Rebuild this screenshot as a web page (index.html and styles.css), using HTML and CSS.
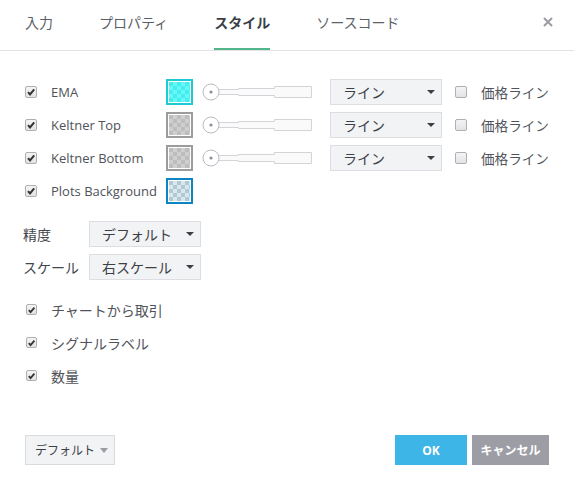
FILE: index.html
```html
<!DOCTYPE html>
<html lang="ja">
<head>
<meta charset="utf-8">
<link rel="stylesheet" href="styles.css">
</head>
<body>
<div class="dialog">
  <div class="tabs">
    <span class="tab">入力</span>
    <span class="tab">プロパティ</span>
    <span class="tab active">スタイル</span>
    <span class="tab">ソースコード</span>
    <span class="close">
      <svg width="10" height="10" viewBox="0 0 10 10"><path d="M1 1 L9 9 M9 1 L1 9" stroke="#9a9ca3" stroke-width="2"/></svg>
    </span>
  </div>

  <div class="content">
    <div class="plots">
      <div class="plot-row">
        <span class="cb checked"><svg width="10" height="10" viewBox="0 0 10 10"><path d="M2 5.2 L4 7.4 L8.2 2.4" fill="none" stroke="#333" stroke-width="2"/></svg></span>
        <span class="plot-label">EMA</span>
        <span class="swatch cyan"><span class="inner"></span></span>
        <svg class="slider" width="110" height="26" viewBox="0 0 110 26"><path d="M17 10.5 H36.5 V9.5 H72.5 V7.5 H109.5 V18.5 H72.5 V16.5 H36.5 V15.5 H17" fill="#fafafa" stroke="#d3d4d8"/><circle cx="9" cy="13" r="8" fill="#fff" stroke="#b9bcc4"/><circle cx="9" cy="13" r="1.6" fill="#8a8f9a"/></svg>
        <span class="select wide">ライン<span class="arrow"></span></span>
        <span class="cb"></span>
        <span class="price">価格ライン</span>
      </div>
      <div class="plot-row">
        <span class="cb checked"><svg width="10" height="10" viewBox="0 0 10 10"><path d="M2 5.2 L4 7.4 L8.2 2.4" fill="none" stroke="#333" stroke-width="2"/></svg></span>
        <span class="plot-label">Keltner Top</span>
        <span class="swatch gray"><span class="inner"></span></span>
        <svg class="slider" width="110" height="26" viewBox="0 0 110 26"><path d="M17 10.5 H36.5 V9.5 H72.5 V7.5 H109.5 V18.5 H72.5 V16.5 H36.5 V15.5 H17" fill="#fafafa" stroke="#d3d4d8"/><circle cx="9" cy="13" r="8" fill="#fff" stroke="#b9bcc4"/><circle cx="9" cy="13" r="1.6" fill="#8a8f9a"/></svg>
        <span class="select wide">ライン<span class="arrow"></span></span>
        <span class="cb"></span>
        <span class="price">価格ライン</span>
      </div>
      <div class="plot-row">
        <span class="cb checked"><svg width="10" height="10" viewBox="0 0 10 10"><path d="M2 5.2 L4 7.4 L8.2 2.4" fill="none" stroke="#333" stroke-width="2"/></svg></span>
        <span class="plot-label">Keltner Bottom</span>
        <span class="swatch gray"><span class="inner"></span></span>
        <svg class="slider" width="110" height="26" viewBox="0 0 110 26"><path d="M17 10.5 H36.5 V9.5 H72.5 V7.5 H109.5 V18.5 H72.5 V16.5 H36.5 V15.5 H17" fill="#fafafa" stroke="#d3d4d8"/><circle cx="9" cy="13" r="8" fill="#fff" stroke="#b9bcc4"/><circle cx="9" cy="13" r="1.6" fill="#8a8f9a"/></svg>
        <span class="select wide">ライン<span class="arrow"></span></span>
        <span class="cb"></span>
        <span class="price">価格ライン</span>
      </div>
      <div class="plot-row">
        <span class="cb checked"><svg width="10" height="10" viewBox="0 0 10 10"><path d="M2 5.2 L4 7.4 L8.2 2.4" fill="none" stroke="#333" stroke-width="2"/></svg></span>
        <span class="plot-label">Plots Background</span>
        <span class="swatch blue"><span class="inner"></span></span>
      </div>
    </div>

    <div class="fields">
      <div class="field-row">
        <span class="field-label">精度</span>
        <span class="select wide">デフォルト<span class="arrow"></span></span>
      </div>
      <div class="field-row">
        <span class="field-label">スケール</span>
        <span class="select wide">右スケール<span class="arrow"></span></span>
      </div>
    </div>

    <div class="checks">
      <div class="check-row">
        <span class="cb checked small"><svg width="10" height="10" viewBox="0 0 10 10"><path d="M2 5.2 L4 7.4 L8.2 2.4" fill="none" stroke="#333" stroke-width="2"/></svg></span>
        <span class="check-label">チャートから取引</span>
      </div>
      <div class="check-row">
        <span class="cb checked small"><svg width="10" height="10" viewBox="0 0 10 10"><path d="M2 5.2 L4 7.4 L8.2 2.4" fill="none" stroke="#333" stroke-width="2"/></svg></span>
        <span class="check-label">シグナルラベル</span>
      </div>
      <div class="check-row">
        <span class="cb checked small"><svg width="10" height="10" viewBox="0 0 10 10"><path d="M2 5.2 L4 7.4 L8.2 2.4" fill="none" stroke="#333" stroke-width="2"/></svg></span>
        <span class="check-label">数量</span>
      </div>
    </div>
  </div>

  <div class="footer">
    <span class="btn-default">デフォルト<span class="arrow gray-arrow"></span></span>
    <span class="spacer"></span>
    <span class="btn ok">OK</span>
    <span class="btn cancel">キャンセル</span>
  </div>
</div>
</body>
</html>
```

FILE: styles.css
```css
* { box-sizing: border-box; }
html, body { margin: 0; padding: 0; background: #fff; }
body {
  font-family: "Open Sans", "Noto Sans CJK JP", sans-serif;
  color: #4a4d55;
  font-size: 14px;
}
.dialog {
  width: 574px;
  height: 486px;
  display: flex;
  flex-direction: column;
}
.tabs {
  height: 51px;
  border-bottom: 1px solid #e1e3e6;
  display: flex;
  align-items: stretch;
  padding-left: 25px;
  padding-right: 21px;
  gap: 46px;
}
.tab {
  display: flex;
  align-items: center;
  height: 50px;
  border-bottom: 2px solid transparent;
  padding-bottom: 2px;
  font-size: 14px;
  color: #5b5f68;
  line-height: 1;
}
.tab.active {
  color: #3b3f47;
  font-weight: bold;
  border-bottom-color: #52b68a;
}
.close {
  margin-left: auto;
  display: flex;
  align-items: center;
  padding-bottom: 7px;
}
.content {
  padding: 28px 0 0 25px;
  flex: 1;
}
.plots {
  display: flex;
  flex-direction: column;
  gap: 7px;
}
.plot-row {
  display: flex;
  align-items: center;
  height: 26px;
}
.cb {
  width: 12px;
  height: 12px;
  border: 1px solid #adafb4;
  border-radius: 2px;
  background: linear-gradient(#f4f4f5, #e2e3e5);
  display: inline-flex;
  align-items: center;
  justify-content: center;
  flex: none;
}
.cb svg { display: block; }
.plot-label {
  margin-left: 14px;
  width: 115px;
  font-size: 13px;
  color: #505359;
}
.swatch {
  width: 27px;
  height: 26px;
  border: 2px solid #9c9c9c;
  padding: 1px;
  background: #fff;
  flex: none;
}
.swatch .inner {
  display: block;
  width: 100%;
  height: 100%;
  background-size: 8px 8px;
}
.swatch.cyan { border-color: #1ecbd4; }
.swatch.cyan .inner {
  background-color: #4cf3f3;
  background-image: conic-gradient(#66f7f7 25%, #44eeee 0 50%, #66f7f7 0 75%, #44eeee 0);
}
.swatch.gray .inner {
  background-image: conic-gradient(#cfcfcf 25%, #bdbdbd 0 50%, #cfcfcf 0 75%, #bdbdbd 0);
}
.swatch.blue { border-color: #0b86c2; }
.swatch.blue .inner {
  background-image: conic-gradient(#d9e8ee 25%, #b3c9d1 0 50%, #d9e8ee 0 75%, #b3c9d1 0);
}
.slider {
  margin-left: 9px;
  display: block;
  flex: none;
}
.select {
  height: 26px;
  background: #f2f3f5;
  border: 1px solid #dcdee2;
  display: inline-flex;
  align-items: center;
  padding-left: 12px;
  font-size: 14px;
  color: #3c3f46;
  white-space: nowrap;
  flex: none;
}
.select.wide { width: 112px; }
.plot-row .select { margin-left: 18px; }
.arrow {
  width: 0;
  height: 0;
  border-left: 4px solid transparent;
  border-right: 4px solid transparent;
  border-top: 4px solid #3c3f46;
  margin-left: auto;
  margin-right: 6px;
}
.plot-row .cb:not(.checked) { margin-left: 13px; }
.price {
  margin-left: 14px;
  font-size: 13.6px;
  color: #505359;
}
.fields {
  margin-top: 17px;
  margin-left: -2px;
  display: flex;
  flex-direction: column;
  gap: 7px;
}
.field-row {
  display: flex;
  align-items: center;
  height: 26px;
}
.field-label {
  width: 66px;
  font-size: 14px;
  color: #43464d;
}
.checks {
  margin-top: 13px;
  display: flex;
  flex-direction: column;
}
.check-row {
  display: flex;
  align-items: center;
  height: 33px;
}
.cb.small { margin-left: 1px; width: 11px; height: 11px; }
.check-label {
  margin-left: 14px;
  font-size: 14px;
  color: #505359;
}
.footer {
  display: flex;
  align-items: center;
  padding: 0 25px 21px 25px;
  gap: 5px;
}
.btn-default {
  width: 90px;
  height: 30px;
  background: #f2f3f5;
  border: 1px solid #d8dade;
  display: inline-flex;
  align-items: center;
  padding-left: 9px;
  font-size: 12px;
  color: #3c3f46;
  white-space: nowrap;
}
.gray-arrow {
  border-top-color: #9a9ca2;
  border-left-width: 4px;
  border-right-width: 4px;
  border-top-width: 5px;
  margin-left: 5px;
  margin-right: 0;
}
.spacer { flex: 1; }
.btn {
  height: 30px;
  display: inline-flex;
  align-items: center;
  justify-content: center;
  color: #fff;
  font-weight: bold;
  font-size: 12px;
}
.ok { width: 72px; background: #3db5e6; }
.cancel { width: 77px; background: #9d9ea5; }
```
